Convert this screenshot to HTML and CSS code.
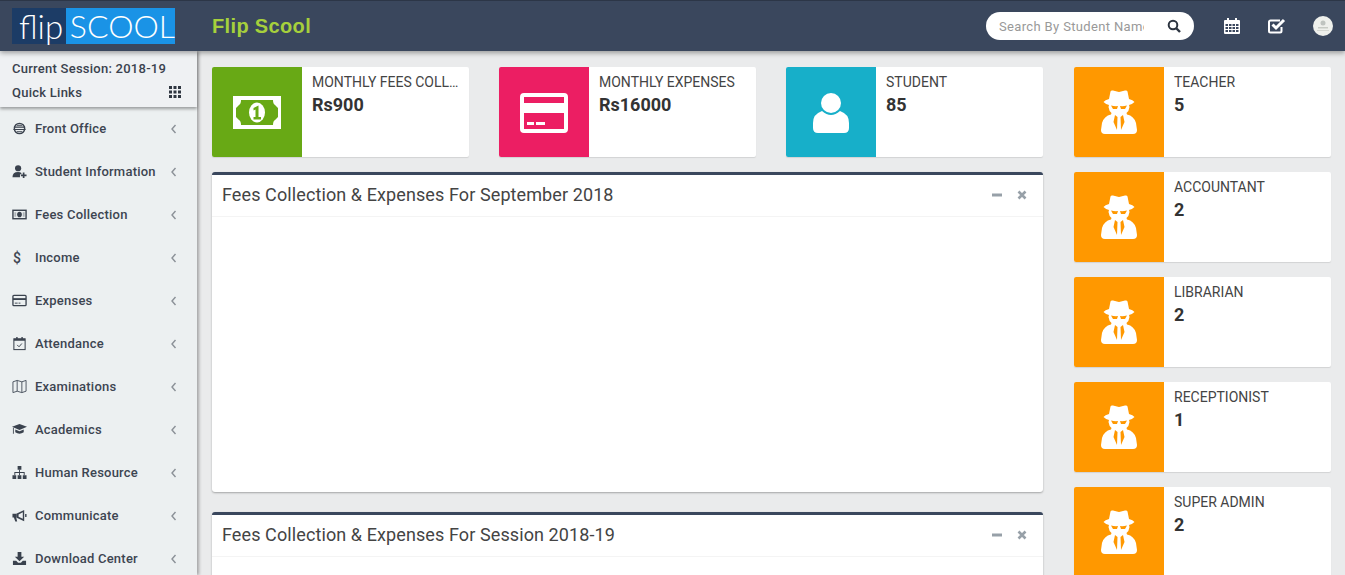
FILE: index.html
```html
<!DOCTYPE html>
<html lang="en">
<head>
  <meta charset="UTF-8">
  <title>Flip Scool</title>
  <link rel="stylesheet" href="styles.css">
</head>
<body>

  <svg class="defs" width="0" height="0">
    <symbol id="spy" viewBox="0 0 36 44">
      <path fill="#fff" d="M9.500 1.500 Q10 0 12 0.500 L18 2 L24 0.500 Q26 0 26.500 1.500 L28 9 Q32 10 33.500 12 Q31 14.500 28 15 L28.500 17 Q28 21 25.500 23 L26 24.500 Q33 26 35 33 L36 40 Q36 44 32 44 L4 44 Q0 44 0 40 L1 33 Q3 26 10 24.500 L10.500 23 Q8 21 7.500 17 L8 15 Q5 14.500 2.500 12 Q4 10 8 9Z"/>
      <path fill="#ff9800" d="M10 15.500 Q14 16.500 17 16 L16 19 L12 19Z M26 15.500 Q22 16.500 19 16 L20 19 L24 19Z M14 25 L16.500 27 L16 40 L12.500 32Z M22 25 L19.500 27 L20 40 L23.500 32Z"/>
    </symbol>
    <symbol id="chev" viewBox="0 0 8 10">
      <path d="M5.500 1 L2 5 L5.500 9" fill="none" stroke="currentColor" stroke-width="1.400"/>
    </symbol>
  </svg>

  <header class="topbar">
    <div class="logo"><span class="logo-flip">flip</span><span class="logo-scool">SCOOL</span></div>
    <div class="brand">Flip Scool</div>
    <div class="topbar-right">
      <div class="search">
        <input type="text" placeholder="Search By Student Name">
        <svg width="14" height="14" viewBox="0 0 14 14"><circle cx="6" cy="6" r="4.300" fill="none" stroke="#2c3440" stroke-width="2"/><path d="M9 9 L13 13" stroke="#2c3440" stroke-width="2.400"/></svg>
      </div>
      <svg class="top-icon" width="16" height="16" viewBox="0 0 16 16">
        <path fill="#fff" fill-rule="evenodd" d="M3 0h2v2h6V0h2v2h2a1 1 0 0 1 1 1v12a1 1 0 0 1-1 1H1a1 1 0 0 1-1-1V3a1 1 0 0 1 1-1h2zM1.500 6v2h2.500V6zm3.500 0v2h2.500V6zm3.500 0v2H11V6zm3.500 0v2h2.500V6zM1.500 9v2h2.500V9zm3.500 0v2h2.500V9zm3.500 0v2H11V9zm3.500 0v2h2.500V9zM1.500 12v2h2.500v-2zm3.500 0v2h2.500v-2zm3.500 0v2H11v-2zm3.500 0v2h2.500v-2z"/>
      </svg>
      <svg class="top-icon" width="18" height="16" viewBox="0 0 18 16">
        <path fill="none" stroke="#fff" stroke-width="2" d="M13.500 9v4a1.500 1.500 0 0 1-1.500 1.500H2.500A1.500 1.500 0 0 1 1 13V4a1.500 1.500 0 0 1 1.500-1.500H12"/>
        <path fill="none" stroke="#fff" stroke-width="3" d="M4.500 6.500 L8 10 L16 2"/>
      </svg>
      <div class="avatar">
        <svg width="20" height="20" viewBox="0 0 20 20"><circle cx="10" cy="7" r="2.500" fill="#bfc4c0"/><path d="M5 11h10v1.500H5z" fill="#c7cbc5"/><path d="M4 14h12v1H4z" fill="#d5d8d2"/></svg>
      </div>
    </div>
  </header>

  <div class="layout">
    <aside class="sidebar">
      <div class="session">
        <div class="session-line">Current Session: 2018-19</div>
        <div class="session-line quick">
          <span>Quick Links</span>
          <svg width="12" height="12" viewBox="0 0 12 12" fill="#2f3640"><path d="M0 0h3v3H0zM4.500 0h3v3h-3zM9 0h3v3H9zM0 4.500h3v3H0zM4.500 4.500h3v3h-3zM9 4.500h3v3H9zM0 9h3v3H0zM4.500 9h3v3h-3zM9 9h3v3H9z"/></svg>
        </div>
      </div>
      <ul class="menu">
        <li>
          <svg class="menu-icon" viewBox="0 0 16 16"><circle cx="8" cy="8" r="5.500" fill="none" stroke="#3a424e" stroke-width="1.500"/><path d="M2 6.500h12M1.500 9h13M5 4.500h6M5 11.500h6" stroke="#3a424e" stroke-width="1.200"/></svg>
          <span>Front Office</span>
          <svg class="chev"><use href="#chev"/></svg>
        </li>
        <li>
          <svg class="menu-icon" viewBox="0 0 16 16" fill="#3a424e"><circle cx="6.500" cy="4.500" r="3.300"/><path d="M0.500 14 Q0.500 8.500 6.500 8.500 Q9 8.500 10 9.500 L10 11 L8.500 11 L8.500 14Z"/><path d="M11.500 9h1.800v2.200h2.200V13h-2.200v2h-1.800v-2H9.500v-1.800h2z"/></svg>
          <span>Student Information</span>
          <svg class="chev"><use href="#chev"/></svg>
        </li>
        <li>
          <svg class="menu-icon" viewBox="0 0 16 16"><rect x="1" y="3.500" width="14" height="9" fill="none" stroke="#3a424e" stroke-width="1.500"/><ellipse cx="8" cy="8" rx="2.500" ry="3" fill="#3a424e"/><path d="M2.500 5.500h2v5h-2zM11.500 5.500h2v5h-2z" fill="#3a424e" opacity=".35"/></svg>
          <span>Fees Collection</span>
          <svg class="chev"><use href="#chev"/></svg>
        </li>
        <li>
          <span class="dollar">$</span>
          <span>Income</span>
          <svg class="chev"><use href="#chev"/></svg>
        </li>
        <li>
          <svg class="menu-icon" viewBox="0 0 16 16"><rect x="1" y="2.500" width="14" height="11" rx="1" fill="none" stroke="#3a424e" stroke-width="1.400"/><path d="M1 5.500h14v2H1z" fill="#3a424e"/><path d="M3 10.800h3M7 10.800h2" stroke="#3a424e" stroke-width="1"/></svg>
          <span>Expenses</span>
          <svg class="chev"><use href="#chev"/></svg>
        </li>
        <li>
          <svg class="menu-icon" viewBox="0 0 16 16"><rect x="2" y="3" width="12" height="11.500" fill="none" stroke="#3a424e" stroke-width="1.100"/><path d="M2 3h12v2H2zM4.500 1h1.500v3H4.500zM10 1h1.500v3H10z" fill="#3a424e"/><path d="M5.500 9.500 L7.500 11.500 L10.500 8" fill="none" stroke="#3a424e" stroke-width="1"/></svg>
          <span>Attendance</span>
          <svg class="chev"><use href="#chev"/></svg>
        </li>
        <li>
          <svg class="menu-icon" viewBox="0 0 16 16"><path d="M1 3 L5.500 1.500 L10.500 3 L15 1.500 V13 L10.500 14.500 L5.500 13 L1 14.500Z M5.500 1.500 V13 M10.500 3 V14.500" fill="none" stroke="#4a525e" stroke-width="1"/></svg>
          <span>Examinations</span>
          <svg class="chev"><use href="#chev"/></svg>
        </li>
        <li>
          <svg class="menu-icon" viewBox="0 0 16 16" fill="#3a424e"><path d="M8 2 L16 5 L8 8.500 L0 5Z"/><path d="M3.500 8 L8 9.800 L12.500 8 V11 Q8 14 3.500 11Z"/><path d="M1 6h.9v6.500H1z"/></svg>
          <span>Academics</span>
          <svg class="chev"><use href="#chev"/></svg>
        </li>
        <li>
          <svg class="menu-icon" viewBox="0 0 16 16" fill="#3a424e"><path d="M6 1h4v4H6zM0.500 11h4v4h-4zM6 11h4v4H6zM11.500 11h4v4h-4z"/><path d="M7.500 5h1v2.500h5V11h-1V8.500h-4V11h-1V8.500h-4V11h-1V7.500h5z"/></svg>
          <span>Human Resource</span>
          <svg class="chev"><use href="#chev"/></svg>
        </li>
        <li>
          <svg class="menu-icon" viewBox="0 0 16 16"><path d="M0.500 6h4v4h-4z M2 10h2.500l1 4.500H3.500z" fill="#3a424e"/><path d="M4.500 6 L13 2 V14 L4.500 10Z" fill="#3a424e"/><path d="M7 6.800 L11.500 4.500 V11.500 L7 9.200Z" fill="#eceff1"/><path d="M14 6.500h1.500v3H14z" fill="#3a424e"/></svg>
          <span>Communicate</span>
          <svg class="chev"><use href="#chev"/></svg>
        </li>
        <li>
          <svg class="menu-icon" viewBox="0 0 16 16" fill="#3a424e"><path d="M6 1h4v5h3l-5 5-5-5h3z"/><path d="M1 10.500h3.500l2 2h3l2-2H15V15H1z"/></svg>
          <span>Download Center</span>
          <svg class="chev"><use href="#chev"/></svg>
        </li>
      </ul>
    </aside>

    <main class="content">
      <div class="col-left">
        <div class="stat-row">
          <div class="stat">
            <div class="stat-icon green">
              <svg width="48" height="33" viewBox="0 0 48 33">
                <rect width="48" height="33" fill="#fff"/>
                <path d="M8 4 H40 Q40 8 42 9 L45 12 V21 L42 24 Q40 25 40 29 H8 Q8 25 6 24 L3 21 V12 L6 9 Q8 8 8 4Z" fill="#68a915"/>
                <ellipse cx="24" cy="16.500" rx="8" ry="10" fill="#fff"/>
                <path d="M20.500 12 L25.500 9.500 V21 H28 V23.500 H20.500 V21 H22.500 V13.500 L20.500 14.500Z" fill="#68a915"/>
              </svg>
            </div>
            <div class="stat-body">
              <div class="stat-label">MONTHLY FEES COLLECTION</div>
              <div class="stat-num">Rs900</div>
            </div>
          </div>
          <div class="stat">
            <div class="stat-icon pink">
              <svg class="icon-low" width="48" height="40" viewBox="0 0 48 40">
                <path fill="#fff" fill-rule="evenodd" d="M4 0h40a4 4 0 0 1 4 4v32a4 4 0 0 1-4 4H4a4 4 0 0 1-4-4V4a4 4 0 0 1 4-4zM4 4v6h40V4zM4 20v16h40V20z"/>
                <path fill="#fff" d="M7 29h7v3H7zM16 29h9v3h-9z"/>
              </svg>
            </div>
            <div class="stat-body">
              <div class="stat-label">MONTHLY EXPENSES</div>
              <div class="stat-num">Rs16000</div>
            </div>
          </div>
          <div class="stat">
            <div class="stat-icon teal">
              <svg class="icon-low" width="36" height="40" viewBox="0 0 36 40" fill="#fff">
                <circle cx="18" cy="10" r="10"/>
                <path d="M9 18 Q18 26 27 18 Q36 21 36 30 V35 Q36 40 31 40 H5 Q0 40 0 35 V30 Q0 21 9 18Z"/>
              </svg>
            </div>
            <div class="stat-body">
              <div class="stat-label">STUDENT</div>
              <div class="stat-num">85</div>
            </div>
          </div>
        </div>

        <section class="panel chart-panel">
          <div class="panel-head">
            <h3>Fees Collection &amp; Expenses For September 2018</h3>
            <div class="panel-tools">
              <svg width="10" height="10" viewBox="0 0 10 10"><path d="M0 3.500h10v3H0z" fill="#97a0a8"/></svg>
              <svg width="10" height="10" viewBox="0 0 10 10"><path d="M1.500 1.500 L8.500 8.500 M8.500 1.500 L1.500 8.500" stroke="#97a0a8" stroke-width="2.600"/></svg>
            </div>
          </div>
        </section>

        <section class="panel">
          <div class="panel-head">
            <h3>Fees Collection &amp; Expenses For Session 2018-19</h3>
            <div class="panel-tools">
              <svg width="10" height="10" viewBox="0 0 10 10"><path d="M0 3.500h10v3H0z" fill="#97a0a8"/></svg>
              <svg width="10" height="10" viewBox="0 0 10 10"><path d="M1.500 1.500 L8.500 8.500 M8.500 1.500 L1.500 8.500" stroke="#97a0a8" stroke-width="2.600"/></svg>
            </div>
          </div>
          <div class="panel-body"></div>
        </section>
      </div>

      <div class="col-right">
        <div class="stat">
          <div class="stat-icon orange"><svg class="spy"><use href="#spy"/></svg></div>
          <div class="stat-body"><div class="stat-label">TEACHER</div><div class="stat-num">5</div></div>
        </div>
        <div class="stat">
          <div class="stat-icon orange"><svg class="spy"><use href="#spy"/></svg></div>
          <div class="stat-body"><div class="stat-label">ACCOUNTANT</div><div class="stat-num">2</div></div>
        </div>
        <div class="stat">
          <div class="stat-icon orange"><svg class="spy"><use href="#spy"/></svg></div>
          <div class="stat-body"><div class="stat-label">LIBRARIAN</div><div class="stat-num">2</div></div>
        </div>
        <div class="stat">
          <div class="stat-icon orange"><svg class="spy"><use href="#spy"/></svg></div>
          <div class="stat-body"><div class="stat-label">RECEPTIONIST</div><div class="stat-num">1</div></div>
        </div>
        <div class="stat">
          <div class="stat-icon orange"><svg class="spy"><use href="#spy"/></svg></div>
          <div class="stat-body"><div class="stat-label">SUPER ADMIN</div><div class="stat-num">2</div></div>
        </div>
      </div>
    </main>
  </div>

</body>
</html>
```

FILE: styles.css
```css
* {
  box-sizing: border-box;
}

html, body {
  height: 575px;
  overflow: hidden;
}

body {
  margin: 0;
  font-family: Roboto, Arial, sans-serif;
  font-size: 14px;
  color: #333;
  background: #eaebec;
}

.defs {
  position: absolute;
}

.topbar {
  display: flex;
  align-items: center;
  height: 51px;
  background: #3a475d;
  border-top: 1px solid #2c3647;
  box-shadow: 0 2px 5px rgba(0, 0, 0, 0.35);
  position: relative;
  z-index: 3;
}

.logo {
  display: flex;
  margin-left: 12px;
  width: 163px;
  height: 36px;
  font-family: Lato, sans-serif;
  font-weight: 300;
  color: #fff;
  background: #1c3c66;
  line-height: 36px;
}

.logo-flip {
  width: 55px;
  padding-left: 7px;
  font-size: 33px;
}

.logo-scool {
  flex: 1;
  padding-left: 4px;
  font-size: 32px;
  background: #1a93e6;
}

.brand {
  margin-left: 37px;
  font-family: "Liberation Sans", Arial, sans-serif;
  font-size: 20px;
  font-weight: bold;
  letter-spacing: 0.35px;
  color: #a6d03c;
}

.topbar-right {
  display: flex;
  align-items: center;
  margin-left: auto;
  padding-right: 12px;
}

.search {
  display: flex;
  align-items: center;
  width: 208px;
  height: 28px;
  padding: 0 13px;
  background: #fff;
  border-radius: 14px;
}

.search input {
  width: 145px;
  padding: 0;
  border: 0;
  outline: 0;
  font-family: Roboto, Arial, sans-serif;
  font-size: 13px;
  letter-spacing: 0.35px;
}

.search input::placeholder {
  color: #999;
  opacity: 1;
}

.search svg {
  margin-left: auto;
}

.top-icon {
  margin-left: 30px;
}

.top-icon + .top-icon {
  margin-left: 28px;
}

.avatar {
  width: 20px;
  height: 20px;
  margin-left: 27px;
  background: #eef0ec;
  border-radius: 50%;
  overflow: hidden;
}

.avatar svg {
  display: block;
}

.layout {
  display: flex;
  height: 524px;
}

.sidebar {
  flex: none;
  width: 197px;
  background: #ecf0f1;
  box-shadow: 2px 0 3px rgba(0, 0, 0, 0.3);
  position: relative;
  z-index: 2;
}

.session {
  height: 56px;
  padding-top: 5px;
  background: #eff1f3;
  box-shadow: 0 2px 3px rgba(0, 0, 0, 0.35);
  position: relative;
}

.session-line {
  display: flex;
  justify-content: space-between;
  align-items: center;
  height: 24px;
  padding: 0 16px 0 12px;
  font-size: 13px;
  font-weight: 500;
  letter-spacing: 0.25px;
  color: #3a424e;
}

.menu {
  margin: 0;
  padding: 0;
  list-style: none;
}

.menu li {
  display: flex;
  align-items: center;
  height: 43px;
  padding: 0 19px 0 12px;
  font-size: 13px;
  font-weight: 500;
  letter-spacing: 0.22px;
  color: #3d4551;
}

.menu-icon {
  flex: none;
  width: 15px;
  height: 15px;
  margin-right: 8px;
}

.dollar {
  flex: none;
  width: 15px;
  margin-right: 8px;
  padding-left: 1px;
  font-size: 14px;
}

.chev {
  width: 8px;
  height: 10px;
  margin-left: auto;
  color: #8a9097;
}

.content {
  display: flex;
  flex: 1;
  gap: 31px;
  padding: 16px 14px 0 15px;
  min-width: 0;
}

.col-left {
  flex: none;
  width: 831px;
}

.col-right {
  flex: none;
  width: 257px;
}

.stat-row {
  display: flex;
  gap: 30px;
}

.stat-row .stat {
  flex: 1;
  min-width: 0;
}

.stat {
  display: flex;
  height: 90px;
  margin-bottom: 15px;
  background: #fff;
  border-radius: 2px;
  box-shadow: 0 1px 1px rgba(0, 0, 0, 0.1);
}

.stat-icon {
  flex: none;
  display: flex;
  align-items: center;
  justify-content: center;
  width: 90px;
  height: 90px;
  border-radius: 2px 0 0 2px;
}

.icon-low {
  margin-top: 2px;
}

.green { background: #68a915; }
.pink { background: #ec1e63; }
.teal { background: #17afc9; }
.orange { background: #ff9800; }

.spy {
  width: 36px;
  height: 44px;
}

.stat-body {
  flex: 1;
  min-width: 0;
  padding: 6px 10px;
}

.stat-label {
  overflow: hidden;
  white-space: nowrap;
  text-overflow: ellipsis;
  font-size: 14px;
  line-height: 19px;
  color: #444;
}

.stat-num {
  font-size: 18px;
  font-weight: bold;
  line-height: 26px;
  color: #333;
}

.panel {
  background: #fff;
  border-top: 3px solid #3a475d;
  border-radius: 3px;
  box-shadow: 0 1px 2px rgba(0, 0, 0, 0.3);
}

.chart-panel {
  height: 320px;
  margin-bottom: 20px;
}

.panel-head {
  display: flex;
  align-items: center;
  height: 42px;
  padding: 0 16px 2px 10px;
  border-bottom: 1px solid #f4f4f4;
}

.panel-head h3 {
  margin: 0;
  font-size: 18px;
  font-weight: 400;
  letter-spacing: 0.1px;
  color: #444;
}

.panel-tools {
  display: flex;
  gap: 15px;
  margin-left: auto;
}

.panel-body {
  height: 300px;
}
```
